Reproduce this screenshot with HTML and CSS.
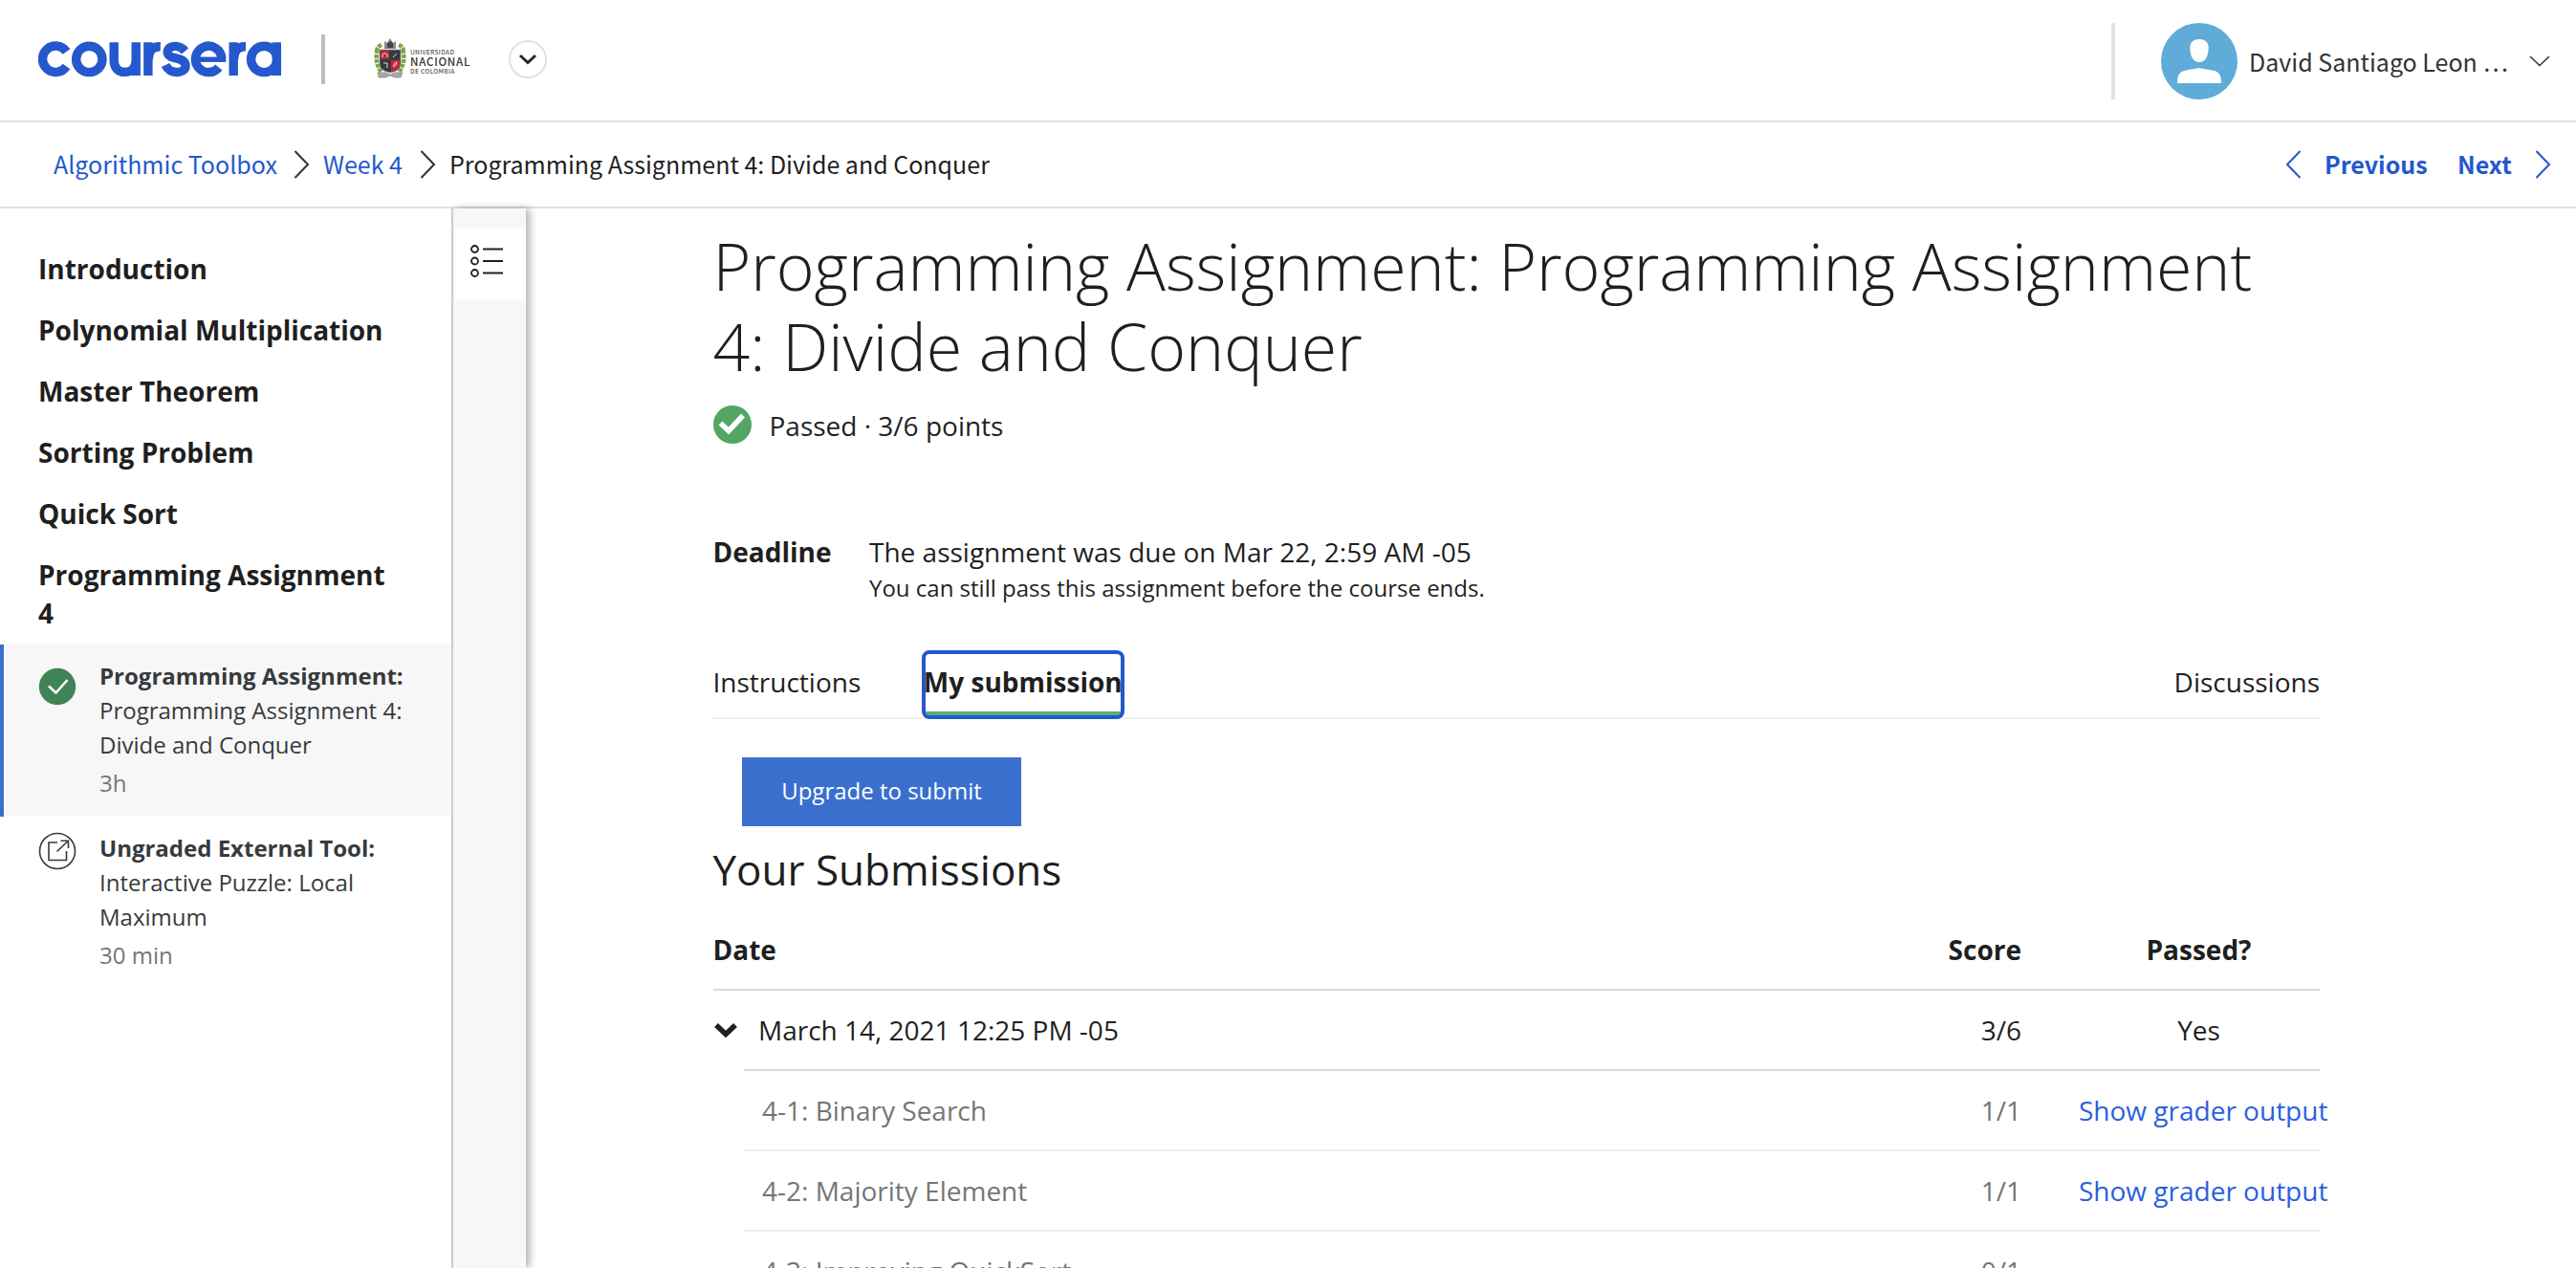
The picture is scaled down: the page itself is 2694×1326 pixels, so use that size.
FILE: index.html
```html
<!DOCTYPE html>
<html lang="en">
<head>
<meta charset="utf-8">
<title>Programming Assignment 4: Divide and Conquer</title>
<link rel="stylesheet" href="styles.css">
</head>
<body>
<header class="topbar">
  <svg class="logo" viewBox="0 0 254 38" fill="none" stroke="#2458cc" stroke-width="9.4" role="img" aria-label="Coursera">
    <path d="M29.500 11A13.700 13.700 0 1 0 29.500 26.500"/>
    <circle cx="53.300" cy="18.900" r="13.700"/>
    <path d="M79.200 1.300V20C79.200 28.500 84 32.400 90.500 32.400S102.200 28 102.200 20M102.200 1.300V36"/>
    <path d="M114.900 1.300V36M115.500 19C115.500 9.500 120 5.500 127.800 5.700"/>
    <path d="M153.500 10.500C150.500 7 147.500 5.400 143.500 5.400C134 5.400 133 13.800 138.500 16.300C143 18.300 154 18 154 25.800C154 30.500 149.500 32.500 145 32.500C139 32.500 135.500 30 133 25"/>
    <path d="M188.800 27.500A13.700 13.700 0 1 1 191.800 17.500"/><path d="M168 19.200H196.300" stroke-width="5.400"/>
    <path d="M204.200 1.300V36M204.800 19C204.800 9.500 209 5.500 217 5.700"/>
    <circle cx="236.200" cy="18.900" r="13.700"/><path d="M249.300 1.300V36"/>
  </svg>
  <span class="divider"></span>
  <a class="partner" href="#">
    <svg class="crest" viewBox="0 0 34 42">
      <path d="M4 12Q0 24 8 36M30 12Q34 24 26 36M8 7Q3 9 3 14M26 7Q31 9 31 14" fill="none" stroke="#79a843" stroke-width="4.500" stroke-dasharray="4 1"/>
      <path d="M11 11V3l3 2 3-5 3 5 3-2v8z" fill="#888"/><path d="M14 5l3-2 3 2v5h-6z" fill="#444"/>
      <path d="M6 12H28V27Q28 34 17 36Q6 34 6 27Z" fill="#35393c" stroke="#999" stroke-width=".8"/>
      <path d="M6.500 12.500H16V22H6.500Z" fill="#b42b38"/><path d="M18 23H27.500V28Q26 33 18 35Z" fill="#c52738"/>
      <path d="M9 20v-3q2-3 5 0v3M20 20l4-4M10 26h4v5M24 25q-4 1-3 5l2-2z" fill="none" stroke="#ddd" stroke-width="1"/>
      <path d="M4 36h8l5 2 5-2h8l-2 5h-6l-5-2-5 2H5z" fill="#aaa" stroke="#777" stroke-width=".6"/>
    </svg>
    <span class="partner-name"><small>UNIVERSIDAD</small><b>NACIONAL</b><small>DE COLOMBIA</small></span>
  </a>
  <button class="round" aria-label="Switch"><svg width="20" height="12" viewBox="0 0 20 12"><path d="M2 2l8 7.500L18 2" fill="none" stroke="#1f2a35" stroke-width="3"/></svg></button>
  <div class="account">
    <svg class="avatar" viewBox="0 0 80 80"><circle cx="40" cy="40" r="40" fill="#5eacd7"/><path d="M40 17c6 0 10 3.500 9.700 9.500C49.300 34 47 41 40 41s-9.300-7-9.700-14.500C30 20.500 34 17 40 17zM17 63c0-8 2-11.500 7-13 5-1.300 11-1.800 16-3 5 1.200 11 1.700 16 3 5 1.500 7 5 7 13z" fill="#fff"/></svg>
    <span class="user">David Santiago Leon …</span>
    <svg width="22" height="12" viewBox="0 0 22 12"><path d="M1 1l10 9.500L21 1" fill="none" stroke="#333" stroke-width="1.500"/></svg>
  </div>
</header>
<nav class="crumbs">
  <a href="#" class="c1">Algorithmic Toolbox</a>
  <svg class="sep" viewBox="0 0 17 30"><path d="M1.500 1L15 15 1.500 29" fill="none" stroke="#333" stroke-width="2"/></svg>
  <a href="#" class="c2">Week 4</a>
  <svg class="sep" viewBox="0 0 17 30"><path d="M1.500 1L15 15 1.500 29" fill="none" stroke="#333" stroke-width="2"/></svg>
  <span class="c3">Programming Assignment 4: Divide and Conquer</span>
  <div class="pager">
    <svg class="sep" viewBox="0 0 17 30"><path d="M15.500 1L2 15 15.500 29" fill="none" stroke="#2458cc" stroke-width="2"/></svg>
    <a href="#" class="prev">Previous</a>
    <a href="#" class="next">Next</a>
    <svg class="sep" viewBox="0 0 17 30"><path d="M1.500 1L15 15 1.500 29" fill="none" stroke="#2458cc" stroke-width="2"/></svg>
  </div>
</nav>
<div class="page">
  <aside class="side">
    <h2>Introduction</h2>
    <h2>Polynomial Multiplication</h2>
    <h2>Master Theorem</h2>
    <h2>Sorting Problem</h2>
    <h2>Quick Sort</h2>
    <h2>Programming Assignment 4</h2>
    <a class="item active" href="#">
      <svg class="state" viewBox="0 0 40 40"><circle cx="20" cy="20" r="19.200" fill="#408357"/><path d="M11 19.500l7.500 7L30.500 13" fill="none" stroke="#fff" stroke-width="2.600"/></svg>
      <span class="desc"><b>Programming Assignment:</b> Programming Assignment 4: Divide and Conquer<span class="time">3h</span></span>
    </a>
    <a class="item" href="#">
      <svg class="state up" viewBox="0 0 40 40" fill="none" stroke="#373a3c" stroke-width="1.600"><circle cx="20" cy="20" r="18.500"/><path d="M20 11H11V29.500H29.500V20M19.500 20.500L31 9.500M23.500 9.300h8V17"/></svg>
      <span class="desc"><b>Ungraded External Tool:</b> Interactive Puzzle: Local Maximum<span class="time">30 min</span></span>
    </a>
  </aside>
  <div class="rail">
    <div class="toc"><svg width="34" height="34" viewBox="0 0 34 34" fill="none" stroke="#1f1f1f" stroke-width="1.800"><circle cx="4.500" cy="4.500" r="3.500"/><circle cx="4.500" cy="17" r="3.500"/><circle cx="4.500" cy="29.500" r="3.500"/><path d="M13 4.500H34M13 17H34M13 29.500H34"/></svg></div>
  </div>
  <main class="main">
    <h1>Programming Assignment: Programming Assignment 4: Divide and Conquer</h1>
    <div class="status">
      <svg width="40" height="40" viewBox="0 0 40 40"><circle cx="20" cy="20" r="20" fill="#52a563"/><path d="M7.500 18.500L16 26.500 31 10.500" fill="none" stroke="#fff" stroke-width="5.500"/></svg>
      <span>Passed · 3/6 points</span>
    </div>
    <div class="deadline">
      <b>Deadline</b>
      <div>The assignment was due on Mar 22, 2:59 AM -05<small>You can still pass this assignment before the course ends.</small></div>
    </div>
    <div class="tabs">
      <a href="#">Instructions</a>
      <a href="#" class="current"><span>My submission</span></a>
      <a href="#" class="last">Discussions</a>
    </div>
    <button class="upgrade">Upgrade to submit</button>
    <h3>Your Submissions</h3>
    <div class="row head"><span class="name">Date</span><span class="score">Score</span><span class="pass">Passed?</span></div>
    <div class="row day"><svg class="chev" viewBox="0 0 26 16"><path d="M3 3l10 9.500L23 3" fill="none" stroke="#1f1f1f" stroke-width="5.500"/></svg><span class="name">March 14, 2021 12:25 PM -05</span><span class="score">3/6</span><span class="pass">Yes</span></div>
    <div class="parts">
      <div class="row"><span class="name">4-1: Binary Search</span><span class="score">1/1</span><a class="pass" href="#">Show grader output</a></div>
      <div class="row"><span class="name">4-2: Majority Element</span><span class="score">1/1</span><a class="pass" href="#">Show grader output</a></div>
      <div class="row"><span class="name">4-3: Improving QuickSort</span><span class="score">0/1</span><span class="pass"></span></div>
    </div>
  </main>
</div>
</body>
</html>
```
FILE: styles.css
```css
* { box-sizing: border-box; }
body { margin: 0; height: 1326px; overflow: hidden; background: #fff; color: #1f1f1f; font: 28px/40px "Open Sans", sans-serif; }
a { text-decoration: none; color: inherit; }
button { border: 0; padding: 0; background: none; font: inherit; }
svg { display: block; flex: none; }
h1, h2, h3 { margin: 0; }

.topbar { height: 128px; border-bottom: 2px solid #e1e1e1; display: flex; align-items: flex-start; padding: 0 27px 0 40px; }
.logo { width: 254px; height: 38px; margin-top: 43px; }
.divider { width: 4px; height: 52px; margin: 36px 0 0 42px; background: #bdbdbd; }
.partner { display: flex; margin: 40px 0 0 51px; width: 101px; }
.crest { width: 34px; height: 42px; }
.partner-name { display: flex; flex-direction: column; margin: 9px 0 0 4px; color: #555; white-space: nowrap; font-family: "Noto Sans CJK SC", sans-serif; }
.partner-name small { font-size: 6.5px; line-height: 10px; font-weight: 500; letter-spacing: .35px; }
.partner-name b { font-size: 11.5px; line-height: 10px; font-weight: 500; letter-spacing: .75px; color: #333; }
.round { width: 40px; height: 40px; border: 2px solid #e1e1e1; border-radius: 50%; margin: 42px 0 0 40px; display: grid; place-items: center; }
.account { margin: 24px 0 0 auto; height: 80px; display: flex; align-items: center; border-left: 4px solid #e1e1e1; padding-left: 48px; font-family: "Noto Sans CJK SC", sans-serif; color: #333; }
.avatar { width: 80px; height: 80px; margin-right: 12px; }
.user { width: 293px; font-size: 25px; white-space: nowrap; padding-bottom: 1px; }

.crumbs { height: 90px; border-bottom: 2px solid #e1e1e1; display: flex; align-items: center; padding: 0 26px 0 56px; font-family: "Noto Sans CJK SC", sans-serif; font-size: 25px; white-space: nowrap; }
.crumbs a { color: #2458cc; }
.crumbs > a, .crumbs > span, .pager a { padding-bottom: 2px; }
.sep { width: 17px; height: 30px; }
.c1 { width: 251px; }
.c2 { width: 101px; margin-left: 14px; }
.c3 { margin-left: 14px; }
.pager { margin-left: auto; display: flex; align-items: center; font-weight: 700; }
.prev { margin-left: 24px; width: 139px; }
.next { width: 81px; }

.page { display: flex; height: 1108px; }
.side { width: 474px; border-right: 2px solid #ccc; padding-top: 31px; flex: none; background: #fff; position: relative; z-index: 1; }
.side h2 { font-size: 28px; line-height: 40px; font-weight: 700; padding: 12px 60px 12px 40px; }
.side h2:nth-of-type(6) { padding-bottom: 0; margin-bottom: 13px; }
.item { display: flex; height: 180px; padding: 15px 30px 0 40px; color: #373a3c; }
.item.active { background: #f7f7f7; border-left: 4px solid #3a6fcd; padding-left: 36px; }
.state { width: 40px; height: 40px; margin: 9px 24px 0 0; }
.state.up { margin-top: 1px; }
.desc { font-size: 24px; line-height: 36px; }
.desc b { display: block; }
.time { display: block; margin-top: 4px; color: #757575; }
.rail { width: 76px; flex: none; background: #f7f7f7; padding: 20px 0 0 1px; box-shadow: 4px 0 8px rgba(0,0,0,.3); }
.toc { width: 75px; height: 76px; border-radius: 4px; background: #fff; padding: 18px 0 0 17px; }

.main { margin-left: 195.5px; width: 1680.5px; padding-top: 18px; }
h1 { font-size: 68px; line-height: 84px; font-weight: 300; }
.status { display: flex; align-items: center; gap: 19px; margin-top: 20px; height: 40px; }
.status span { padding-top: 2px; }
.deadline { display: flex; margin-top: 93px; }
.deadline b { width: 163.5px; }
.deadline small { display: block; font-size: 24px; line-height: 35px; }
.tabs { display: flex; margin-top: 48px; height: 72px; border-bottom: 2px solid #eee; line-height: 66px; }
.tabs .current { margin-left: 63.5px; width: 212px; height: 72px; border: 4px solid #2458cc; border-radius: 8px; font-weight: 700; box-shadow: 0 0 0 2px #fff; background: linear-gradient(#59af78, #59af78) bottom / 100% 4px no-repeat; line-height: 58px; }
.current span { display: block; margin: 0 -4px; text-align: center; white-space: nowrap; }
.last { margin-left: auto; }
.upgrade { display: block; margin: 40px 0 0 30.5px; width: 292px; height: 72px; background: #3a6fcd; color: #fff; font-size: 24px; padding-bottom: 2px; }
h3 { font-size: 44px; line-height: 60px; font-weight: 400; margin: 15px 0 1px; }
.row { display: flex; height: 84px; align-items: center; border-bottom: 2px solid #eee; white-space: nowrap; }
.name { flex: 1; }
.score { width: 120px; text-align: right; margin-right: 59px; }
.pass { width: 253px; display: flex; justify-content: center; }
.head { height: 96px; padding-top: 12px; font-weight: 700; border-color: #dbdbdb; }
.day { border: 0; height: 82px; }
.chev { width: 26px; height: 16px; margin-right: 21.5px; }
.parts { margin-left: 32.5px; border-top: 2px solid #dbdbdb; color: #757575; }
.parts .name { padding-left: 19px; }
.parts a { color: #2a5fde; justify-content: flex-start; padding-left: 1px; }
```
